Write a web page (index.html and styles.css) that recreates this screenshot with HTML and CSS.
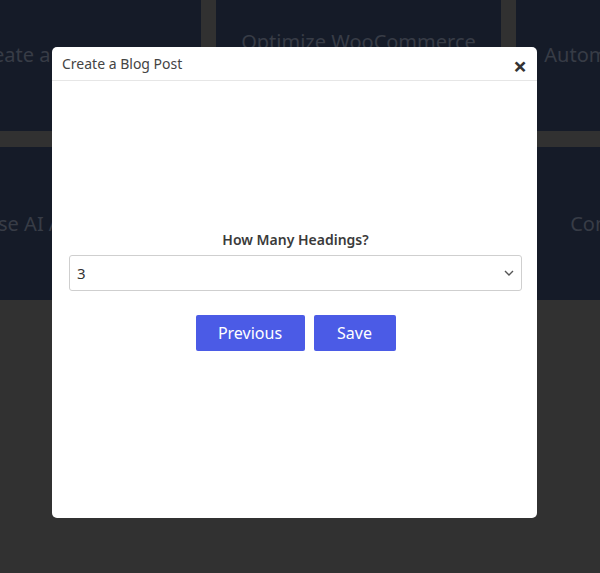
FILE: index.html
```html
<!DOCTYPE html>
<html lang="en">
<head>
    <meta charset="UTF-8">
    <meta name="viewport" content="width=device-width, initial-scale=1.0">
    <title>Create a Blog Post</title>
    <link rel="stylesheet" href="styles.css">
</head>
<body>
    <div class="grid">
        <div class="card">Create a Blog Post</div>
        <div class="card">Optimize WooCommerce Products</div>
        <div class="card">Automate Social Posting</div>
        <div class="card">Use AI Assistant</div>
        <div class="card">Write Product Copy</div>
        <div class="card">Content Generator</div>
    </div>

    <div class="backdrop"></div>

    <div class="modal">
        <div class="modal-header">
            <span class="modal-title">Create a Blog Post</span>
            <span class="close">&times;</span>
        </div>
        <div class="modal-body">
            <label class="field-label" for="headings">How Many Headings?</label>
            <div class="select-wrap">
                <select id="headings" class="select">
                    <option>1</option>
                    <option>2</option>
                    <option selected>3</option>
                    <option>4</option>
                    <option>5</option>
                </select>
                <svg class="chevron" width="10" height="6" viewBox="0 0 10 6">
                    <path d="M1 1 L5 5 L9 1" fill="none" stroke="#555" stroke-width="1.4"/>
                </svg>
            </div>
            <div class="actions">
                <button class="btn btn-prev">Previous</button>
                <button class="btn btn-save">Save</button>
            </div>
        </div>
    </div>
</body>
</html>
```

FILE: styles.css
```css
body {
    margin: 0;
    background-color: #626262;
    font-family: "Noto Sans", "Open Sans", sans-serif;
    overflow: hidden;
    height: 573px;
}
.grid {
    display: grid;
    grid-template-columns: repeat(3, 285px);
    grid-auto-rows: 153px;
    gap: 16px 15px;
    margin: -22px 0 0 -84px;
}
.card {
    background-color: #2a3650;
    color: #6f788c;
    font-size: 20px;
    display: flex;
    align-items: center;
    justify-content: center;
    text-align: center;
    padding: 0 12px;
    line-height: 26px;
}
.backdrop {
    position: fixed;
    inset: 0;
    background-color: rgba(0, 0, 0, 0.5);
}
.modal {
    position: fixed;
    left: 52px;
    top: 47px;
    width: 485px;
    height: 471px;
    background-color: white;
    border-radius: 5px;
    display: flex;
    flex-direction: column;
}
.modal-header {
    height: 33px;
    border-bottom: 1px solid #e6e6e6;
    display: flex;
    align-items: center;
    justify-content: space-between;
    padding: 0 10px 0 10px;
}
.modal-title {
    font-size: 14px;
    color: #444;
}
.close {
    font-size: 24px;
    font-weight: bold;
    color: #333;
    line-height: 1;
    margin-top: 4px;
}
.modal-body {
    padding: 149px 15px 0 17px;
    display: flex;
    flex-direction: column;
    align-items: stretch;
}
.field-label {
    text-align: center;
    font-size: 14px;
    font-weight: 600;
    color: #3a3a3a;
    line-height: 20px;
    margin-bottom: 5px;
}
.select-wrap {
    position: relative;
}
.select {
    appearance: none;
    width: 100%;
    height: 36px;
    border: 1px solid #cfcfcf;
    border-radius: 3px;
    background: white;
    padding: 0 7px;
    font-family: inherit;
    font-size: 15px;
    color: #333;
}
.chevron {
    position: absolute;
    right: 8px;
    top: 15px;
}
.actions {
    display: flex;
    justify-content: center;
    gap: 9px;
    margin-top: 24px;
}
.btn {
    height: 36px;
    border: none;
    border-radius: 2px;
    background-color: #4b5be6;
    color: white;
    font-family: inherit;
    font-size: 16px;
    padding: 0;
}
.btn-prev {
    width: 109px;
}
.btn-save {
    width: 82px;
}
```
